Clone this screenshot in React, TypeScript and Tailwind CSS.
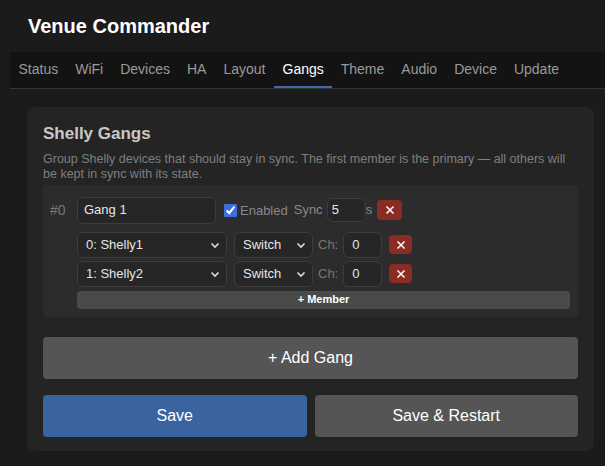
import { useState } from "react";

const tabs = ["Status", "WiFi", "Devices", "HA", "Layout", "Gangs", "Theme", "Audio", "Device", "Update"];

function Chevron() {
  return (
    <svg className="absolute right-[6px] top-1/2 -translate-y-1/2 pointer-events-none" width="10" height="10" viewBox="0 0 10 10" fill="none">
      <path d="M1.5 3.5 L5 7 L8.5 3.5" stroke="#ddd" strokeWidth="1.6" />
    </svg>
  );
}

function RemoveBtn({ className }: { className: string }) {
  return (
    <button className={`flex items-center justify-center rounded bg-[#8a2b24] text-white ${className}`}>
      <svg width="10" height="10" viewBox="0 0 10 10">
        <path d="M1.5 1.5 L8.5 8.5 M8.5 1.5 L1.5 8.5" stroke="#fff" strokeWidth="1.5" />
      </svg>
    </button>
  );
}

function MemberRow({ name }: { name: string }) {
  return (
    <div className="flex items-center">
      <div className="relative w-[150px] h-[26px] rounded-md border border-[#3c3c3c] bg-[#262626] text-[13px] text-[#e5e5e5] flex items-center pl-2">
        {name}
        <Chevron />
      </div>
      <div className="relative ml-[7px] w-[79px] h-[26px] rounded-md border border-[#3c3c3c] bg-[#262626] text-[13px] text-[#e5e5e5] flex items-center pl-2">
        Switch
        <Chevron />
      </div>
      <span className="ml-[5px] text-[13px] text-[#777]">Ch:</span>
      <div className="ml-[5px] w-[39px] h-[26px] rounded-md border border-[#3c3c3c] bg-[#262626] text-[13px] text-[#e5e5e5] flex items-center pl-2">0</div>
      <RemoveBtn className="ml-[7px] w-[23px] h-[19px]" />
    </div>
  );
}

export default function App() {
  const [enabled, setEnabled] = useState(true);
  return (
    <div className="min-h-[466px] w-[605px] overflow-hidden bg-[#1b1b1b] font-[Liberation_Sans,Arial,sans-serif]">
      <h1 className="px-[28px] pt-[11px] h-[52px] text-[20px] font-bold text-white">Venue Commander</h1>
      <nav className="ml-[10px] flex h-[37px] bg-[#131313] border-b border-[#333] whitespace-nowrap pl-[0px]">
        {tabs.map((t) => (
          <div
            key={t}
            className={`px-[8.5px] flex items-center text-[14px] border-b-2 ${
              t === "Gangs" ? "text-white border-[#3d6ba5]" : "text-[#9a9a9a] border-transparent"
            }`}
          >
            {t}
          </div>
        ))}
      </nav>
      <div className="ml-[27px] mr-[11px] mt-[18px] rounded-lg bg-[#242424] px-[16px] pt-[14px] pb-[14px]">
        <h2 className="text-[17px] font-bold text-[#c8c8c8]">Shelly Gangs</h2>
        <p className="mt-[5px] text-[12.5px] leading-[15px] text-[#7f7f7f]">
          Group Shelly devices that should stay in sync. The first member is the primary — all others will be kept in sync with its state.
        </p>
        <div className="mt-[3px] rounded bg-[#2c2c2c] pl-[7px] pr-[8px] pt-[12px] pb-[8px]">
          <div className="flex items-center">
            <span className="w-[27px] text-[14px] text-[#777]">#0</span>
            <div className="w-[139px] h-[27px] rounded-md border border-[#3c3c3c] bg-[#262626] text-[13px] text-[#e5e5e5] flex items-center pl-[6px]">Gang 1</div>
            <input
              type="checkbox"
              checked={enabled}
              onChange={() => setEnabled(!enabled)}
              className="ml-[8px] w-[13px] h-[13px] accent-[#3b6de0]"
            />
            <span className="ml-[3px] text-[13px] text-[#888] mt-[2px]">Enabled</span>
            <span className="ml-[6px] text-[13px] text-[#888]">Sync</span>
            <div className="ml-[4px] w-[39px] h-[24px] rounded-md border border-[#3c3c3c] bg-[#262626] text-[13px] text-[#e5e5e5] flex items-center pl-[4px]">5</div>
            <span className="text-[13px] text-[#888]">s</span>
            <RemoveBtn className="ml-[5px] w-[25px] h-[20px]" />
          </div>
          <div className="pl-[27px] mt-[8px] flex flex-col gap-[3px]">
            <MemberRow name="0: Shelly1" />
            <MemberRow name="1: Shelly2" />
            <button className="mt-[1px] h-[18px] w-full rounded bg-[#4a4a4a] text-[11px] font-bold text-white">+ Member</button>
          </div>
        </div>
        <button className="mt-[20px] w-full h-[42px] rounded bg-[#555] text-[16px] text-white">+ Add Gang</button>
        <div className="mt-[16px] flex gap-[8px]">
          <button className="flex-1 h-[42px] rounded bg-[#3a64a0] text-[16px] text-white">Save</button>
          <button className="flex-1 h-[42px] rounded bg-[#555] text-[16px] text-white">Save &amp; Restart</button>
        </div>
      </div>
    </div>
  );
}
